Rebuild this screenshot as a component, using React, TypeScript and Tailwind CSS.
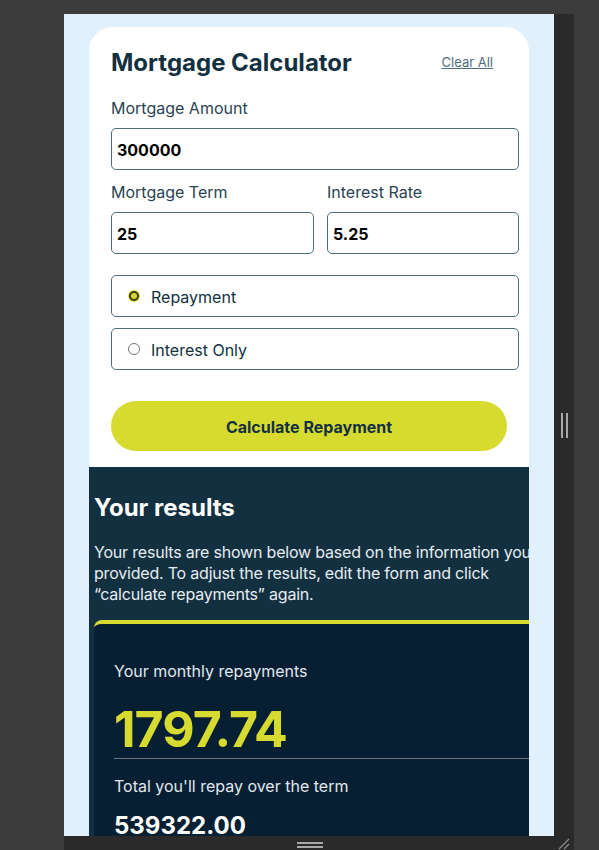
import React from "react";

const font = { fontFamily: "Inter, 'Noto Sans', sans-serif" };

function Field({ value, className }: { value: string; className: string }) {
  return (
    <div
      className={`h-[42px] rounded-[5px] border border-[#4e6e7e] flex items-center pl-[5px] pt-[1px] text-[16px] font-bold text-black ${className}`}
    >
      {value}
    </div>
  );
}

function Radio({ label, checked, className }: { label: string; checked?: boolean; className?: string }) {
  return (
    <div
      className={`h-[42px] w-[408px] rounded-[5px] border border-[#4e6e7e] flex items-center pl-[16px] gap-[11px] ${className ?? ""}`}
    >
      {checked ? (
        <span className="w-[12px] h-[12px] rounded-full bg-[#d8db2f] flex items-center justify-center">
          <span className="w-[10px] h-[10px] rounded-full border-2 border-[#3d3f12] bg-[#d8db2f]" />
        </span>
      ) : (
        <span className="w-[12px] h-[12px] rounded-full border border-[#767676] bg-white" />
      )}
      <span className="text-[16px] text-[#133041] leading-6 pt-[2px]">{label}</span>
    </div>
  );
}

export default function App() {
  return (
    <div className="w-[599px] h-[850px] bg-[#3c3c3c] overflow-hidden pt-[14px] pl-[64px]" style={font}>
      <div className="flex flex-col w-[510px]">
        <div className="flex">
          <div className="w-[490px] h-[822px] bg-[#e1f0fb] overflow-hidden pt-[13px] pl-[25px]">
            <div className="w-[440px] overflow-hidden">
              <div className="bg-white rounded-t-3xl pt-[20px] pl-[22px] pr-[10px] pb-[16px]">
                <div className="flex items-center justify-between">
                  <h1 className="text-[24px] leading-8 font-bold text-[#133041] tracking-[0px]">Mortgage Calculator</h1>
                  <a className="text-[13px] text-[#4e6e7e] underline mr-[26px]">Clear All</a>
                </div>
                <div className="mt-[17px] text-[16px] leading-6 text-[#2a4352]">Mortgage Amount</div>
                <Field value="300000" className="mt-2 w-[408px]" />
                <div className="mt-[10px] flex gap-[13px]">
                  <div className="w-[203px]">
                    <div className="text-[16px] leading-6 text-[#2a4352]">Mortgage Term</div>
                    <Field value="25" className="mt-2 w-[203px]" />
                  </div>
                  <div className="w-[192px]">
                    <div className="text-[16px] leading-6 text-[#2a4352]">Interest Rate</div>
                    <Field value="5.25" className="mt-2 w-[192px]" />
                  </div>
                </div>
                <Radio label="Repayment" checked className="mt-[21px]" />
                <Radio label="Interest Only" className="mt-[11px]" />
                <button className="mt-[31px] w-[396px] h-[50px] pt-[2px] rounded-full bg-[#d8db2f] text-[16px] font-bold text-[#133041]">
                  Calculate Repayment
                </button>
              </div>
              <div className="bg-[#133041] pt-[25px] pl-[5px] h-[400px] overflow-hidden">
                <h2 className="text-[24px] leading-8 font-bold text-white">Your results</h2>
                <p className="mt-[18px] text-[16px] leading-[21px] text-[#e6edf2] whitespace-nowrap tracking-[-0.2px]">
                  Your results are shown below based on the information you
                  <br />
                  provided. To adjust the results, edit the form and click
                  <br />
                  “calculate repayments” again.
                </p>
                <div className="mt-[15px] w-[460px] h-[300px] bg-[#071f33] border-t-4 border-[#d8db2f] rounded-tl-lg pt-[35px] pl-5">
                  <div className="text-[16px] leading-6 text-[#e0e8ee]">Your monthly repayments</div>
                  <div className="mt-[18px] text-[50px] leading-[56px] font-bold text-[#d8db2f] tracking-[-1px]">1797.74</div>
                  <div className="mt-[1px] h-px bg-[#6b7680]" />
                  <div className="mt-[15px] text-[16px] leading-6 text-[#e0e8ee]">Total you'll repay over the term</div>
                  <div className="mt-3 text-[24px] leading-8 font-bold text-white">539322.00</div>
                </div>
              </div>
            </div>
          </div>
          <div className="w-[20px] h-[822px] bg-[#2a2a2a] flex items-center justify-center gap-[3px]">
            <span className="w-[2px] h-[25px] bg-[#a8a8a8]" />
            <span className="w-[2px] h-[25px] bg-[#a8a8a8]" />
          </div>
        </div>
        <div className="h-[14px] w-[510px] bg-[#2a2a2a] relative">
          <div className="absolute left-[233px] top-[6px] flex flex-col gap-[2px]">
            <span className="block w-[26px] h-[2px] bg-[#a8a8a8]" />
            <span className="block w-[26px] h-[2px] bg-[#a8a8a8]" />
          </div>
          <svg className="absolute left-[494px] top-[2px]" width="12" height="12" viewBox="0 0 12 12">
            <line x1="1" y1="11" x2="11" y2="1" stroke="#8a8a8a" strokeWidth="1.2" />
            <line x1="6" y1="11" x2="11" y2="6" stroke="#8a8a8a" strokeWidth="1.2" />
          </svg>
        </div>
      </div>
    </div>
  );
}
